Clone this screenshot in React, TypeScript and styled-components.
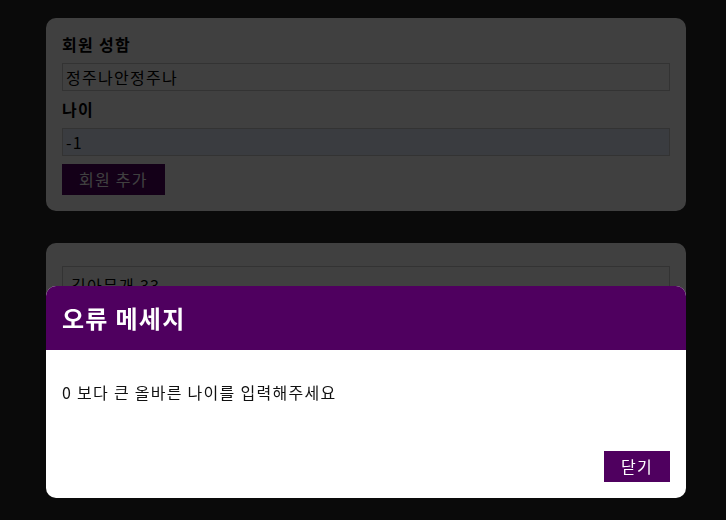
import styled, { createGlobalStyle } from 'styled-components';

const GlobalStyle = createGlobalStyle`
  * {
    box-sizing: border-box;
  }
  html {
    font-family: 'Noto Sans CJK KR', 'Noto Sans', sans-serif;
    font-size: 16px;
    line-height: 21px;
    letter-spacing: 0.08em;
  }
  body {
    margin: 0;
    background: #292929;
  }
`;

const users = [{ id: 'u1', name: '김아무개', age: 33 }];

function App() {
  return (
    <>
      <GlobalStyle />
      <Main>
        <Card>
          <Form onSubmit={(e) => e.preventDefault()}>
            <Label htmlFor="username">회원 성함</Label>
            <Input id="username" type="text" defaultValue="정주나안정주나" />
            <Label htmlFor="age">나이</Label>
            <Input id="age" type="number" defaultValue="-1" filled />
            <Button type="submit">회원 추가</Button>
          </Form>
        </Card>
        <Card>
          <UserList>
            {users.map((user) => (
              <UserItem key={user.id}>
                {user.name} {user.age}
              </UserItem>
            ))}
          </UserList>
        </Card>
      </Main>
      <Backdrop />
      <Modal>
        <ModalHeader>
          <Title>오류 메세지</Title>
        </ModalHeader>
        <ModalContent>
          <Message>0 보다 큰 올바른 나이를 입력해주세요</Message>
        </ModalContent>
        <ModalActions>
          <Button type="button">닫기</Button>
        </ModalActions>
      </Modal>
    </>
  );
}

export default App;

const Main = styled.main`
  padding: 18px 0 0 6px;
`;

const Card = styled.div`
  background: #ffffff;
  border-radius: 10px;
  width: 640px;
  margin: 0 auto 32px;
`;

const Form = styled.form`
  padding: 16px;
`;

const Label = styled.label`
  display: block;
  font-weight: bold;
  margin-bottom: 8px;
  color: #000;
`;

const Input = styled.input<{ filled?: boolean }>`
  font: inherit;
  letter-spacing: inherit;
  display: block;
  width: 100%;
  height: 28px;
  border: 1px solid #ccc;
  padding: 2px 3px;
  margin: 0 0 8px;
  color: #000;
  background: ${(p) => (p.filled ? '#e8f0fe' : '#ffffff')};
  outline: none;
  -moz-appearance: textfield;
  &::-webkit-inner-spin-button,
  &::-webkit-outer-spin-button {
    -webkit-appearance: none;
    margin: 0;
  }
`;

const Button = styled.button`
  font: inherit;
  letter-spacing: inherit;
  border: 1px solid #4f005f;
  background: #4f005f;
  color: #ffffff;
  padding: 4px 16px;
  cursor: pointer;
`;

const UserList = styled.ul`
  list-style: none;
  margin: 0;
  padding: 16px;
`;

const UserItem = styled.li`
  border: 1px solid #ccc;
  margin: 7px 0 8px;
  padding: 8px;
`;

const Backdrop = styled.div`
  position: fixed;
  inset: 0;
  background: rgba(0, 0, 0, 0.75);
  z-index: 10;
`;

const Modal = styled.div`
  position: fixed;
  top: 286px;
  left: 46px;
  width: 640px;
  z-index: 100;
  overflow: hidden;
  border-radius: 10px;
  background: #ffffff;
`;

const ModalHeader = styled.header`
  background: #4f005f;
  padding: 16px;
`;

const Title = styled.h2`
  margin: 0;
  color: #ffffff;
  font-size: 24px;
  line-height: 32px;
  font-weight: bold;
`;

const ModalContent = styled.div`
  padding: 16px;
`;

const Message = styled.p`
  margin: 16px 0;
  color: #111;
`;

const ModalActions = styled.footer`
  display: flex;
  justify-content: flex-end;
  padding: 16px;
`;
